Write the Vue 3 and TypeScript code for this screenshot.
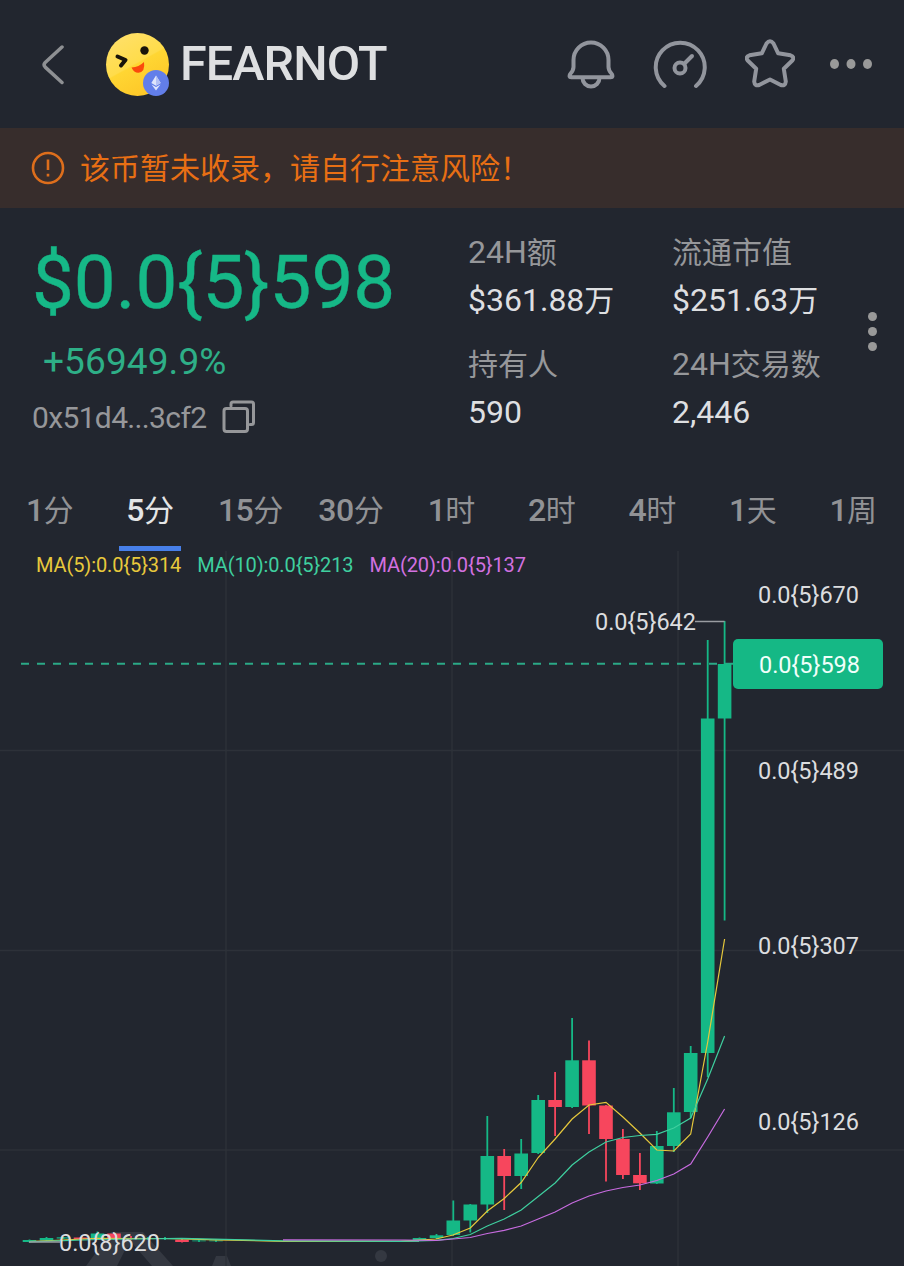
<script setup lang="ts">
interface Stat { latin: string; unit: string; value: string; suffix: string }
interface Tab { num: string; unit: string; active?: boolean }
interface Candle { x: number; high: number; top: number; bottom: number; low: number; up: boolean }

const stats: Stat[] = [
  { latin: '24H', unit: '额', value: '$361.88', suffix: '万' },
  { latin: '', unit: '流通市值', value: '$251.63', suffix: '万' },
  { latin: '', unit: '持有人', value: '590', suffix: '' },
  { latin: '24H', unit: '交易数', value: '2,446', suffix: '' },
]

const tabs: Tab[] = [
  { num: '1', unit: '分' },
  { num: '5', unit: '分', active: true },
  { num: '15', unit: '分' },
  { num: '30', unit: '分' },
  { num: '1', unit: '时' },
  { num: '2', unit: '时' },
  { num: '4', unit: '时' },
  { num: '1', unit: '天' },
  { num: '1', unit: '周' },
]

const averages = [
  { text: 'MA(5):0.0{5}314', tone: 'ma5' },
  { text: 'MA(10):0.0{5}213', tone: 'ma10' },
  { text: 'MA(20):0.0{5}137', tone: 'ma20' },
]

const axis = [
  { y: 603, text: '0.0{5}670' },
  { y: 779, text: '0.0{5}489' },
  { y: 954, text: '0.0{5}307' },
  { y: 1130, text: '0.0{5}126' },
]

function c(x: number, high: number, top: number, bottom: number, low: number, up = true): Candle {
  return { x, high, top, bottom, low, up }
}

const candles: Candle[] = [
  c(29.5, 1239.5, 1240, 1242, 1242.5),
  c(46.5, 1237, 1238, 1240.5, 1241),
  c(63.5, 1237, 1237.3, 1238.5, 1239),
  c(80.5, 1237, 1237.5, 1239, 1239, false),
  c(97.5, 1231.5, 1233.5, 1238, 1239),
  c(114, 1233, 1233.5, 1238, 1240, false),
  c(131, 1236, 1238, 1239, 1240, false),
  c(148, 1237, 1238, 1239, 1240),
  c(165, 1237, 1238, 1239, 1240),
  c(182, 1239, 1239.7, 1242, 1242.5, false),
  c(199, 1239.5, 1240.5, 1241.3, 1242),
  c(216, 1239.5, 1240.5, 1241.3, 1242),
  c(419.5, 1237.5, 1238, 1240, 1241),
  c(436.5, 1234, 1235.3, 1238, 1239),
  c(453.3, 1200.5, 1220.5, 1235, 1236),
  c(470.3, 1204, 1204.5, 1220.5, 1232.5),
  c(487.3, 1116, 1156, 1204.5, 1213),
  c(504.2, 1149, 1156, 1176, 1210, false),
  c(521.2, 1139, 1153.5, 1176, 1189),
  c(538.2, 1095, 1100, 1153, 1154),
  c(555.1, 1072, 1100, 1107, 1136, false),
  c(572.1, 1018, 1060.3, 1107, 1108),
  c(589, 1040.5, 1060.3, 1105.5, 1134, false),
  c(606, 1105, 1105.5, 1139, 1181.5, false),
  c(622.9, 1129, 1139, 1175, 1179, false),
  c(639.9, 1153, 1175, 1183.3, 1190, false),
  c(656.8, 1131, 1146, 1183.5, 1184),
  c(673.8, 1088, 1112.3, 1146, 1152),
  c(690.7, 1046, 1053, 1112, 1118),
  c(707.7, 640, 718.5, 1053, 1077),
  c(724.6, 621, 664, 718.5, 920.5),
]

const ma5 = '29,1241.5 63,1240 97,1238.3 131,1238.5 165,1238.5 216,1239.8 283,1241.3 400,1241.3 436,1239 453,1235 470.3,1228 487.3,1211 504.2,1198.5 521.2,1182.5 538.2,1157.5 555.1,1139 572.1,1119 589,1105 606,1102.3 622.9,1117 639.9,1133 656.8,1150 673.8,1151 690.7,1134 707.7,1042 724.6,939'
const ma10 = '29,1241.8 97,1239.5 182,1238.3 283,1240.8 400,1241.3 436,1240.3 453,1238.5 470.3,1234.5 487.3,1226 504.2,1219 521.2,1210 538.2,1196.5 555.1,1183 572.1,1165 589,1152 606,1142 622.9,1137.5 639.9,1135.5 656.8,1134.3 673.8,1128 690.7,1118 707.7,1079 724.6,1036'
const ma20 = '283,1239.8 405,1240 436,1240.5 470.3,1237.5 487.3,1233.5 504.2,1230.3 521.2,1226 538.2,1219 555.1,1212 572.1,1203 589,1196 606,1191 622.9,1187.5 639.9,1185 656.8,1180.5 673.8,1174 690.7,1164 707.7,1137 724.6,1109'
</script>

<template>
  <main class="screen">
    <header class="bar">
      <svg class="back" width="24" height="40" viewBox="0 0 24 40"><path d="M20 2 3.200 17.500q-2.200 2.300 0 4.600L20 37.500" /></svg>
      <svg class="token" width="66" height="66" viewBox="0 0 66 66">
        <defs>
          <linearGradient id="face" x1="0.2" y1="0" x2="0.75" y2="1">
            <stop offset="0" stop-color="#ffe06a" />
            <stop offset="0.48" stop-color="#ffdc4a" />
            <stop offset="0.5" stop-color="#ffd633" />
            <stop offset="1" stop-color="#fdc526" />
          </linearGradient>
        </defs>
        <circle cx="32.500" cy="33.500" r="31.500" fill="url(#face)" />
        <circle cx="39.500" cy="19.500" r="4.200" fill="#19140a" />
        <path d="m12.500 25.500 8 3.500-4.500 5.500" fill="none" stroke="#19140a" stroke-width="4" stroke-linecap="round" stroke-linejoin="round" />
        <path d="M26.500 36.500q7.500-.500 12.500-5.500 1.500 10-5.500 10.700-4.500 .200-7-5.200z" fill="#fb4a0c" />
        <circle cx="51" cy="52" r="13" fill="#627eea" />
        <path d="m51 44.500-4.700 7.500L51 54.800l4.700-2.800zM46.500 53.500l4.500 6 4.500-6-4.500 2.600z" fill="#dfe5fc" />
        <path d="m51 44.500v10.300l4.700-2.800z" fill="#b4c1f6" />
      </svg>
      <h1 class="name">FEARNOT</h1>
      <div class="actions">
        <svg width="48" height="50" viewBox="0 0 48 50"><path d="M24 3.500A17.500 17.500 0 0 0 6.500 21v7q0 3.500-3.300 7-1.800 3.300 1 3.300h39.600q2.800 0 1-3.300-3.300-3.500-3.300-7v-7A17.500 17.500 0 0 0 24 3.500zM15.500 39a8.500 8.500 0 0 0 17 0" /></svg>
        <svg width="54" height="50" viewBox="0 0 54 50"><path d="M11.500 47a24.500 24.500 0 1 1 31.500 0" /><circle cx="27" cy="29" r="5.500" /><path d="m31.500 24.500 7.500-7.500" /></svg>
        <svg width="50" height="50" viewBox="0 0 50 50"><path d="M21.500 4.500q3.500-4.500 7 0l4.700 9.800 12.300 2q4.500 1.500 1.800 5.200l-8.500 8.300 2 12.700q-.500 5-5 3.500L25 40.500l-10.800 5.500q-4.500 1.500-5-3.500l2-12.700-8.500-8.300q-2.700-3.700 1.800-5.200l12.300-2z" /></svg>
        <svg class="more" width="42" height="10" viewBox="0 0 42 10"><ellipse cx="4.500" cy="5" rx="4.500" ry="5" /><ellipse cx="21" cy="5" rx="4.500" ry="5" /><ellipse cx="37.500" cy="5" rx="4.500" ry="5" /></svg>
      </div>
    </header>

    <div class="warning">
      <svg width="34" height="34" viewBox="0 0 34 34"><circle cx="17" cy="17" r="15" /><path d="M17 8.500v10.500M17 22.800v2.800" /></svg>
      <span>该币暂未收录，请自行注意风险！</span>
    </div>

    <section class="summary">
      <div class="quote">
        <div class="price">$0.0{5}598</div>
        <div class="change">+56949.9%</div>
        <div class="address">
          <span>0x51d4...3cf2</span>
          <svg width="34" height="34" viewBox="0 0 34 34"><rect x="2" y="8.500" width="23.500" height="23" rx="2.500" /><path d="M9 6V4q0-2 2-2h18.500q2 0 2 2v18.500q0 2-2 2H28" /></svg>
        </div>
      </div>
      <dl class="stats">
        <div v-for="s in stats" :key="s.unit">
          <dt><span class="latin">{{ s.latin }}</span>{{ s.unit }}</dt>
          <dd><span class="latin">{{ s.value }}</span>{{ s.suffix }}</dd>
        </div>
      </dl>
      <div class="dots"><i /><i /><i /></div>
    </section>

    <nav class="tabs">
      <div v-for="t in tabs" :key="t.num + t.unit" class="tab" :class="{ active: t.active }"><b>{{ t.num }}</b>{{ t.unit }}</div>
    </nav>

    <section class="chart">
      <div class="legend">
        <span v-for="m in averages" :key="m.tone" :class="m.tone">{{ m.text }}</span>
      </div>
      <svg class="plot" width="904" height="715" viewBox="0 551 904 715">
        <g class="watermark">
          <path d="M86 1266 111 1232h32l30 34h-21l-19-22-8 6-8 16z" />
          <path d="m212 1266 4-10h11l4 10z" />
          <circle cx="381" cy="1256" r="6" />
        </g>
        <path class="grid" d="M226 551v715M452 551v715M678 551v715M0 750.500h904M0 950.500h904M0 1150h904" />
        <line class="last" x1="21" y1="663.700" x2="733" y2="663.700" />
        <g v-for="k in candles" :key="k.x" :class="k.up ? 'up' : 'down'">
          <rect :x="k.x - 0.9" :y="k.high" width="1.800" :height="k.low - k.high" />
          <rect :x="k.x - 6.8" :y="k.top" width="13.600" :height="k.bottom - k.top" />
        </g>
        <path class="flat" d="M283 1241.300H419" />
        <polyline class="line ma5" :points="ma5" />
        <polyline class="line ma10" :points="ma10" />
        <polyline class="line ma20" :points="ma20" />
        <path class="pointer" d="M695 621.500h29.500M29 1242h31" />
        <text x="595" y="630">0.0{5}642</text>
        <text x="59" y="1251">0.0{8}620</text>
        <text v-for="a in axis" :key="a.y" x="758" :y="a.y">{{ a.text }}</text>
        <rect class="tag" x="733" y="639" width="150" height="50" rx="5" />
        <text class="tag-text" x="759" y="673">0.0{5}598</text>
      </svg>
    </section>
  </main>
</template>

<style>
body { background: #22262f; }
</style>

<style scoped>
.screen { width: 904px; height: 1266px; overflow: hidden; background: #22262f; color: #dedfe1; font-family: Roboto, "Noto Sans CJK SC", sans-serif; }
.screen * { box-sizing: border-box; }
.bar { height: 128px; padding: 0 32px 0 42px; display: flex; align-items: center; }
.bar svg { flex: none; fill: none; stroke: #92959d; stroke-width: 4; stroke-linecap: round; stroke-linejoin: round; }
.bar .back { margin-top: 2px; stroke: #8e9093; stroke-width: 3.500px; }
.bar .token { margin-left: 39px; stroke: none; }
.name { margin: 0 0 0 9px; font-size: 48.500px; font-weight: 500; line-height: 60px; letter-spacing: -0.900px; }
.actions { margin-left: auto; display: flex; align-items: center; }
.actions svg { margin-right: 38px; }
.actions svg:nth-child(3) { margin-right: 35px; }
.actions .more { margin-right: 0; fill: #999; stroke: none; }
.warning { height: 80px; padding-left: 31px; display: flex; align-items: center; gap: 15px; background: #372d2c; color: #e86f14; font-size: 30px; }
.warning span { line-height: 44px; margin-top: 1px; }
.warning svg { fill: none; stroke: #dd6e1c; stroke-width: 2.600; }
.summary { height: 272px; display: flex; position: relative; }
.quote { width: 468px; padding: 33px 0 0 32px; color: #16b887; }
.price { height: 84px; font-size: 74.500px; line-height: 84px; -webkit-text-stroke: 0.400px #16b887; }
.change { margin-top: 14px; padding-left: 11px; height: 44px; font-size: 37px; line-height: 46px; letter-spacing: 0.100px; color: #2eaf87; }
.address { margin-top: 14px; display: flex; align-items: center; gap: 16px; height: 40px; font-size: 30px; letter-spacing: -0.650px; color: #96979a; }
.address svg { fill: none; stroke: #96979a; stroke-width: 3; stroke-linecap: round; }
.stats { margin: 0; padding-top: 22px; display: grid; grid-template-columns: 204px 170px; grid-template-rows: 112px 112px; font-size: 30px; }
.stats dt { height: 46px; line-height: 44px; color: #96979a; white-space: nowrap; }
.stats dd { height: 46px; margin: 0; line-height: 48px; white-space: nowrap; }
.latin { font-size: 32px; }
.dots { margin: 104px 0 0 26px; display: flex; flex-direction: column; gap: 6px; }
.dots i { width: 9px; height: 9px; border-radius: 50%; background: #999; }
.tabs { height: 71px; display: grid; grid-template-columns: repeat(9, 1fr); font-size: 30px; line-height: 61px; text-align: center; color: #919295; }
.tab { white-space: nowrap; display: flex; justify-content: center; position: relative; padding-right: 1px; }
.tab b { font-weight: 500; font-size: 32px; letter-spacing: -0.500px; }
.tab.active { color: #e4e5e6; }
.tab.active::after { content: ""; position: absolute; left: 19px; bottom: 0; width: 62px; height: 5px; background: #477fe8; }
.chart { height: 715px; position: relative; }
.plot { display: block; }
.legend { position: absolute; left: 36px; top: 2px; display: flex; gap: 16px; font-size: 20px; line-height: 24px; letter-spacing: -0.110px; white-space: nowrap; }
.legend .ma5 { color: #e8c93c; }
.legend .ma10 { color: #3fcf9f; }
.legend .ma20 { color: #d271e0; }
.plot text { fill: #dcdddf; font-size: 23.500px; letter-spacing: -0.050px; }
.plot .tag { fill: #15b885; }
.plot .tag-text { fill: #f0fffa; }
.grid { stroke: #2d3139; stroke-width: 1.500; }
.last { stroke: #2ba987; stroke-width: 2; stroke-dasharray: 8 8; }
.up { fill: #15b886; }
.down { fill: #f7465d; }
.line { fill: none; stroke-width: 1.200; }
.line.ma5 { stroke: #e6c83c; }
.line.ma10 { stroke: #3fcf9f; }
.line.ma20 { stroke: #c86be0; }
.flat { stroke: #8fb5b0; stroke-width: 1; }
.pointer { fill: none; stroke: #999ca1; stroke-width: 1.500; }
.watermark { fill: #343841; }
</style>
